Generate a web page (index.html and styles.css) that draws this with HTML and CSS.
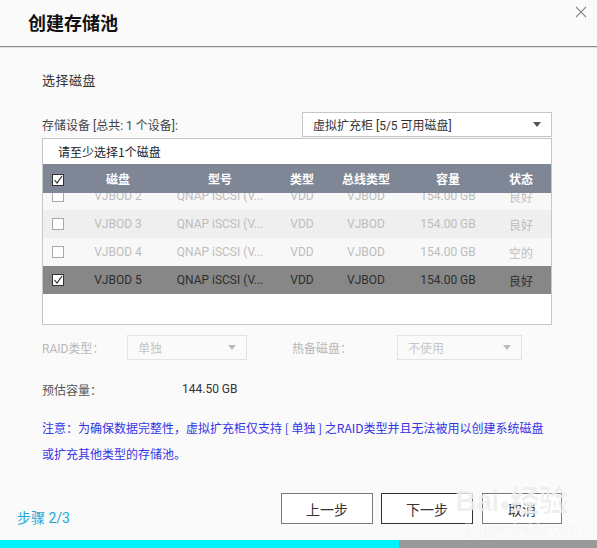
FILE: index.html
```html
<!DOCTYPE html>
<html lang="zh-CN">
<head>
<meta charset="utf-8">
<title>创建存储池</title>
<link rel="stylesheet" href="styles.css">
</head>
<body>
<div class="dialog">
  <header class="dlg-head">
    <h1 class="dlg-title">创建存储池</h1>
    <svg class="close" width="12" height="12" viewBox="0 0 12 12"><path d="M1 1 L11 11 M11 1 L1 11" stroke="#8a8a8a" stroke-width="1.1" fill="none"/></svg>
  </header>

  <main class="dlg-body">
    <div class="section-title">选择磁盘</div>

    <div class="device-row">
      <span class="label">存储设备 [总共: 1 个设备]:</span>
      <div class="select">
        <span>虚拟扩充柜 [5/5 可用磁盘]</span>
        <span class="caret dark"></span>
      </div>
    </div>

    <div class="disk-table">
      <div class="caption">请至少选择1个磁盘</div>
      <div class="row head">
        <div class="cell"><span class="cb checked"><svg width="10" height="10" viewBox="0 0 10 10"><path d="M1.5 5 L4 8 L9 1" stroke="#222" stroke-width="1.1" fill="none"/></svg></span></div>
        <div class="cell">磁盘</div>
        <div class="cell">型号</div>
        <div class="cell">类型</div>
        <div class="cell">总线类型</div>
        <div class="cell">容量</div>
        <div class="cell">状态</div>
      </div>
      <div class="rows-view">
        <div class="rows">
          <div class="row light">
            <div class="cell"><span class="cb"></span></div>
            <div class="cell">VJBOD 2</div>
            <div class="cell">QNAP iSCSI (V...</div>
            <div class="cell">VDD</div>
            <div class="cell">VJBOD</div>
            <div class="cell">154.00 GB</div>
            <div class="cell">良好</div>
          </div>
          <div class="row alt">
            <div class="cell"><span class="cb"></span></div>
            <div class="cell">VJBOD 3</div>
            <div class="cell">QNAP iSCSI (V...</div>
            <div class="cell">VDD</div>
            <div class="cell">VJBOD</div>
            <div class="cell">154.00 GB</div>
            <div class="cell">良好</div>
          </div>
          <div class="row light">
            <div class="cell"><span class="cb"></span></div>
            <div class="cell">VJBOD 4</div>
            <div class="cell">QNAP iSCSI (V...</div>
            <div class="cell">VDD</div>
            <div class="cell">VJBOD</div>
            <div class="cell">154.00 GB</div>
            <div class="cell">空的</div>
          </div>
          <div class="row selected">
            <div class="cell"><span class="cb checked"><svg width="10" height="10" viewBox="0 0 10 10"><path d="M1.5 5 L4 8 L9 1" stroke="#222" stroke-width="1.1" fill="none"/></svg></span></div>
            <div class="cell">VJBOD 5</div>
            <div class="cell">QNAP iSCSI (V...</div>
            <div class="cell">VDD</div>
            <div class="cell">VJBOD</div>
            <div class="cell">154.00 GB</div>
            <div class="cell">良好</div>
          </div>
        </div>
      </div>
    </div>

    <div class="raid-row">
      <span class="label disabled raid-label">RAID类型：</span>
      <div class="combo raid-combo"><span>单独</span><span class="caret"></span></div>
      <span class="label disabled spare-label">热备磁盘：</span>
      <div class="combo spare-combo"><span>不使用</span><span class="caret"></span></div>
    </div>

    <div class="capacity-row">
      <span class="label cap-label">预估容量：</span>
      <span class="cap-value">144.50 GB</span>
    </div>

    <p class="note">注意：为确保数据完整性，虚拟扩充柜仅支持 [ 单独 ] 之RAID类型并且无法被用以创建系统磁盘<br>或扩充其他类型的存储池。</p>
  </main>

  <footer class="dlg-foot">
    <span class="step">步骤 2/3</span>
    <div class="buttons">
      <button class="btn">上一步</button>
      <button class="btn primary">下一步</button>
      <button class="btn cancel">取消</button>
    </div>
  </footer>
  <div class="progress"><div class="progress-fill"></div></div>

  <div class="watermark">
    <div class="wm-logo">Bai<span class="wm-paw">●</span>经验</div>
    <div class="wm-url">jingyan.baidu.com</div>
  </div>
</div>
</body>
</html>
```
FILE: styles.css
```css
* { box-sizing: border-box; }
html, body { margin: 0; padding: 0; }
body {
  background: #fafafa;
  font-family: Roboto, "Noto Sans CJK SC", sans-serif;
  color: #333;
  width: 597px;
  height: 548px;
  overflow: hidden;
}
.dialog {
  position: relative;
  width: 597px;
  height: 548px;
  display: flex;
  flex-direction: column;
}
.dlg-head {
  height: 47px;
  border-bottom: 1px solid #8c8c8c;
  box-shadow: 0 1px 0 #dedede;
  display: flex;
  justify-content: space-between;
  align-items: flex-start;
  padding: 0 10px 0 28px;
}
.dlg-title {
  margin: 9px 0 0;
  font-size: 18px;
  font-weight: bold;
  line-height: 26px;
  color: #111;
  font-family: "Noto Sans CJK SC", sans-serif;
}
.close { margin-top: 6px; }

.dlg-body {
  padding: 0 45px 0 42px;
}
.section-title {
  margin-top: 25px;
  font-size: 13px;
  line-height: 18px;
  letter-spacing: 0.5px;
  color: #333;
}
.device-row {
  margin-top: 22px;
  display: flex;
  justify-content: space-between;
  align-items: center;
  height: 25px;
}
.label { font-size: 12px; color: #444; }
.select {
  width: 250px;
  height: 25px;
  border: 1px solid #c6c6c6;
  background: #fff;
  display: flex;
  justify-content: space-between;
  align-items: center;
  padding: 0 10px 0 10px;
  font-size: 12px;
  color: #333;
}
.caret {
  width: 0; height: 0;
  border-left: 4.5px solid transparent;
  border-right: 4.5px solid transparent;
  border-top: 5px solid #bcbcbc;
}
.caret.dark { border-top-color: #555; }

.disk-table {
  margin-top: 1px;
  border: 1px solid #c6c6c6;
  background: #fff;
  width: 510px;
}
.caption {
  height: 25px;
  line-height: 25px;
  padding-left: 15px;
  font-size: 12px;
  color: #222;
  font-weight: normal;
  font-family: "Noto Sans CJK SC", sans-serif;
}
.row {
  display: grid;
  grid-template-columns: 30px 90px 114px 50px 78px 86px 60px;
  height: 28px;
  align-items: center;
  font-size: 12px;
  color: #bdbdbd;
}
.row .cell {
  text-align: center;
  white-space: nowrap;
  overflow: hidden;
}
.row .cell:first-child { text-align: left; padding-left: 9px; display: flex; align-items: center; }
.row.head {
  height: 29px;
  background: #7f8696;
  color: #fff;
  font-weight: bold;
  font-family: "Noto Sans CJK SC", sans-serif;
}
.rows-view {
  height: 131px;
  overflow: hidden;
}
.rows { margin-top: -11px; }
.row.light { background: #f8f8f8; }
.row.alt { background: #efefef; }
.row.selected { background: #878787; color: #2e2e2e; }

.cb {
  display: inline-flex;
  align-items: center;
  justify-content: center;
  width: 12px;
  height: 12px;
  border: 1px solid #a9a9a9;
  background: #fff;
}
.cb.checked { border-color: #333; }
.row.head .cb { margin-top: 2px; }

.raid-row {
  margin-top: 10px;
  display: flex;
  align-items: center;
  height: 25px;
}
.label.disabled { color: #b8b8b8; }
.raid-label { width: 85px; }
.combo {
  height: 25px;
  border: 1px solid #e3e3e3;
  display: flex;
  justify-content: space-between;
  align-items: center;
  padding: 0 10px;
  font-size: 12px;
  color: #c6c6c6;
}
.raid-combo { width: 120px; }
.spare-label { margin-left: 45px; width: 105px; }
.spare-combo { width: 125px; }

.capacity-row {
  margin-top: 19px;
  height: 20px;
  display: flex;
  align-items: center;
  font-size: 12px;
}
.cap-label { width: 140px; color: #555; }
.cap-value { color: #333; }

.note {
  margin: 16px 0 0;
  font-size: 12px;
  line-height: 26px;
  color: #3434e6;
  font-family: "Noto Sans CJK SC", sans-serif;
}

.dlg-foot {
  margin-top: auto;
  display: flex;
  justify-content: space-between;
  align-items: flex-start;
  padding: 0 35px 0 17px;
}
.step {
  margin-top: 15px;
  font-size: 14px;
  line-height: 20px;
  color: #1ca8d8;
}
.buttons { display: flex; gap: 8px; }
.btn {
  height: 31px;
  width: 92px;
  border: 1px solid #7a7a7a;
  background: #fff;
  font-family: "Noto Sans CJK SC", sans-serif;
  font-size: 14px;
  color: #333;
  padding: 0;
}
.btn.primary { border-color: #333; }
.btn.cancel { width: 80px; margin-left: 1px; }

.progress {
  margin-top: 12px;
  height: 8px;
  background: #9a9a9a;
}
.progress-fill {
  width: 399px;
  height: 8px;
  background: #00f3fd;
}

.watermark {
  position: absolute;
  left: 455px;
  top: 484px;
  pointer-events: none;
  color: rgba(0, 0, 0, 0.06);
  font-family: "Liberation Sans", "Noto Sans CJK SC", sans-serif;
  text-shadow: 0 0 1px rgba(255,255,255,0.9);
}
.wm-logo { font-size: 30px; font-weight: bold; line-height: 34px; letter-spacing: -1px; }
.wm-paw { font-size: 20px; }
.wm-url { font-size: 14px; line-height: 16px; padding-left: 10px; }
```
